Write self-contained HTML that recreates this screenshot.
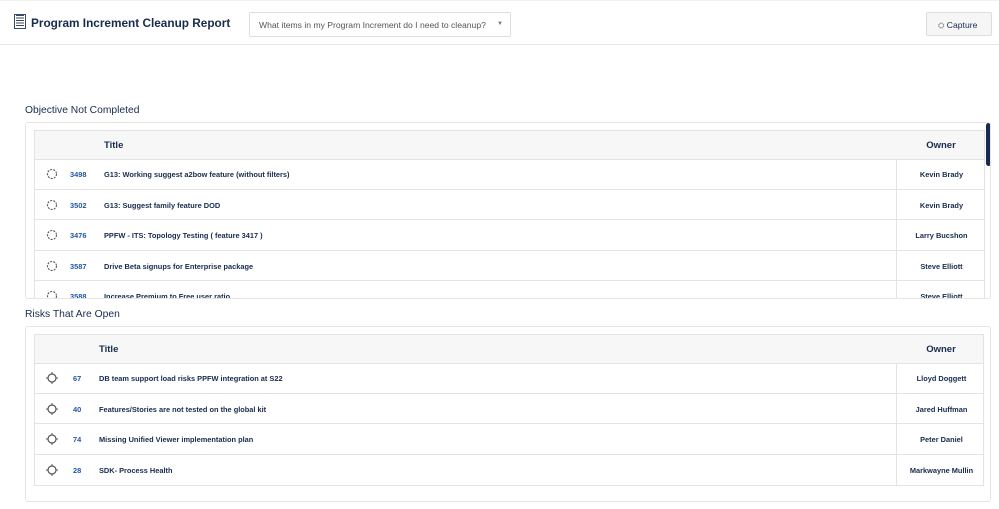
<!DOCTYPE html>
<html><head><meta charset="utf-8"><style>
*{box-sizing:border-box;margin:0;padding:0}
body{width:999px;height:509px;background:#fff;font-family:"Liberation Sans",Arial,sans-serif;color:#172b4d;position:relative;overflow:hidden}
.hdr{position:absolute;left:0;top:0;width:999px;height:45px;border-bottom:1px solid #e6e6e6;border-top:1px solid #f0f0f0}
.t{position:absolute;left:31px;top:15px;font-size:11.8px;font-weight:bold;color:#172b4d}
.dd{position:absolute;left:249px;top:11px;width:262px;height:25px;border:1px solid #ddd;border-radius:2px;font-size:8.6px;color:#555;padding:7px 0 0 9px}
.dd span{position:absolute;right:7px;top:8px;font-size:6px;color:#777}
.cap{position:absolute;left:926px;top:11px;width:66px;height:24px;border:1px solid #ddd;background:#f6f6f6;border-radius:2px;font-size:8.6px;padding:7px 0 0 11px;color:#172b4d}
h2{position:absolute;left:25px;font-size:10.3px;font-weight:normal;color:#172b4d}
.card{position:absolute;left:25px;width:966px;border:1px solid #e5e5e5;border-radius:3px;overflow:hidden}
.row{position:absolute;left:8px;width:951px;border:1px solid #e3e3e3;border-top:none;font-size:7.4px;font-weight:bold;color:#172b4d}
.row.h{border-top:1px solid #e3e3e3;background:#f7f7f7;font-size:9.5px}
.row .id{position:absolute;left:35px;color:#2156a5}
.row .ti{position:absolute;left:69px}
.row .ow{position:absolute;left:861px;width:90px;height:100%;border-left:1px solid #e3e3e3;text-align:center}
.row.h .ow{border-left:none}
.ic{position:absolute;left:11px;width:12px;height:12px}
</style></head><body>
<div class="hdr">
<svg style="position:absolute;left:14px;top:13px" width="12" height="15" viewBox="0 0 12 15"><rect x="0.5" y="0.5" width="11" height="14" fill="none" stroke="#3a4a66"/><path d="M2 1.5h8M2 4h8M2 6.5h8M2 9h8M2 11.5h8" stroke="#3a4a66" stroke-width="1"/></svg>
<div class="t">Program Increment Cleanup Report</div>
<div class="dd">What items in my Program Increment do I need to cleanup?<span>▼</span></div>
<div class="cap"><span style="font-size:8px;color:#888">⛭</span> Capture</div>
</div>

<h2 style="top:105px">Objective Not Completed</h2>
<div class="card" style="top:122px;height:177px">
<div class="row h" style="top:7px;height:30px;width:951px"><span class="ti" style="top:9px">Title</span><span class="ow" style="top:9px;height:auto">Owner</span></div>
<div class="row" style="top:36px;height:31px"><svg class="ic" style="top:9px" viewBox="0 0 12 12"><circle cx="6" cy="6" r="4.5" fill="none" stroke="#555" stroke-width="1.1" stroke-dasharray="2 1.2"/></svg><span class="id" style="top:11px">3498</span><span class="ti" style="top:11px">G13: Working suggest a2bow feature (without filters)</span><span class="ow" style="padding-top:11px;top:0">Kevin Brady</span></div>
<div class="row" style="top:67px;height:30px"><svg class="ic" style="top:9px" viewBox="0 0 12 12"><circle cx="6" cy="6" r="4.5" fill="none" stroke="#555" stroke-width="1.1" stroke-dasharray="2 1.2"/></svg><span class="id" style="top:11px">3502</span><span class="ti" style="top:11px">G13: Suggest family feature DOD</span><span class="ow" style="padding-top:11px;top:0">Kevin Brady</span></div>
<div class="row" style="top:97px;height:31px"><svg class="ic" style="top:9px" viewBox="0 0 12 12"><circle cx="6" cy="6" r="4.5" fill="none" stroke="#555" stroke-width="1.1" stroke-dasharray="2 1.2"/></svg><span class="id" style="top:11px">3476</span><span class="ti" style="top:11px">PPFW - ITS: Topology Testing ( feature 3417 )</span><span class="ow" style="padding-top:11px;top:0">Larry Bucshon</span></div>
<div class="row" style="top:128px;height:30px"><svg class="ic" style="top:9px" viewBox="0 0 12 12"><circle cx="6" cy="6" r="4.5" fill="none" stroke="#555" stroke-width="1.1" stroke-dasharray="2 1.2"/></svg><span class="id" style="top:11px">3587</span><span class="ti" style="top:11px">Drive Beta signups for Enterprise package</span><span class="ow" style="padding-top:11px;top:0">Steve Elliott</span></div>
<div class="row" style="top:158px;height:30px"><svg class="ic" style="top:9px" viewBox="0 0 12 12"><circle cx="6" cy="6" r="4.5" fill="none" stroke="#555" stroke-width="1.1" stroke-dasharray="2 1.2"/></svg><span class="id" style="top:11px">3588</span><span class="ti" style="top:11px">Increase Premium to Free user ratio</span><span class="ow" style="padding-top:11px;top:0">Steve Elliott</span></div>
<div style="position:absolute;left:960px;top:0;width:5px;height:43px;background:#172b4d;border-radius:3px"></div>
</div>

<h2 style="top:309px">Risks That Are Open</h2>
<div class="card" style="top:326px;height:176px">
<div class="row h" style="top:7px;height:30px;width:950px"><span class="ti" style="top:9px;left:64px">Title</span><span class="ow" style="top:9px;height:auto">Owner</span></div>
<div class="row" style="top:36px;height:31px;width:950px"><svg class="ic" style="top:9px" viewBox="0 0 12 12"><circle cx="6" cy="6" r="4" fill="none" stroke="#555" stroke-width="1.2"/><path d="M6 0v2M6 10v2M0 6h2M10 6h2" stroke="#555"/></svg><span class="id" style="top:11px;left:38px">67</span><span class="ti" style="top:11px;left:64px">DB team support load risks PPFW integration at S22</span><span class="ow" style="padding-top:11px;top:0">Lloyd Doggett</span></div>
<div class="row" style="top:67px;height:30px;width:950px"><svg class="ic" style="top:9px" viewBox="0 0 12 12"><circle cx="6" cy="6" r="4" fill="none" stroke="#555" stroke-width="1.2"/><path d="M6 0v2M6 10v2M0 6h2M10 6h2" stroke="#555"/></svg><span class="id" style="top:11px;left:38px">40</span><span class="ti" style="top:11px;left:64px">Features/Stories are not tested on the global kit</span><span class="ow" style="padding-top:11px;top:0">Jared Huffman</span></div>
<div class="row" style="top:97px;height:31px;width:950px"><svg class="ic" style="top:9px" viewBox="0 0 12 12"><circle cx="6" cy="6" r="4" fill="none" stroke="#555" stroke-width="1.2"/><path d="M6 0v2M6 10v2M0 6h2M10 6h2" stroke="#555"/></svg><span class="id" style="top:11px;left:38px">74</span><span class="ti" style="top:11px;left:64px">Missing Unified Viewer implementation plan</span><span class="ow" style="padding-top:11px;top:0">Peter Daniel</span></div>
<div class="row" style="top:128px;height:31px;width:950px"><svg class="ic" style="top:9px" viewBox="0 0 12 12"><circle cx="6" cy="6" r="4" fill="none" stroke="#555" stroke-width="1.2"/><path d="M6 0v2M6 10v2M0 6h2M10 6h2" stroke="#555"/></svg><span class="id" style="top:11px;left:38px">28</span><span class="ti" style="top:11px;left:64px">SDK- Process Health</span><span class="ow" style="padding-top:11px;top:0">Markwayne Mullin</span></div>
</div>
</body></html>
